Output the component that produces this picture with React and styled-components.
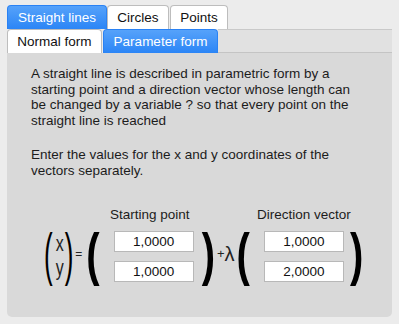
import React from "react";
import styled, { createGlobalStyle } from "styled-components";

const Global = createGlobalStyle`
  body {
    margin: 0;
    background: #ececec;
    font-family: "Liberation Sans", Arial, sans-serif;
    color: #1c1c1c;
  }
`;

const Page = styled.div`
  width: 385px;
  padding: 5px 7px 6px 7px;
`;

const TabRow = styled.div`
  display: flex;
  height: 24px;
`;

const Tab = styled.div`
  box-sizing: border-box;
  width: ${p => p.$w}px;
  margin-left: ${p => p.$gap || 0}px;
  height: 24px;
  display: flex;
  align-items: center;
  justify-content: center;
  font-size: 13.5px;
  border-radius: 4px 4px 0 0;
  border: 1px solid ${p => (p.$active ? "#2a82f4" : "#bdbdbd")};
  border-bottom: none;
  background: ${p =>
    p.$active ? "linear-gradient(#56a2fa, #2b85f6)" : "#ffffff"};
  color: ${p => (p.$active ? "#ffffff" : "#111111")};
`;

const TabStrip = styled.div`
  flex: 1;
  box-sizing: border-box;
  background: #e1e1e1;
  border-top: 1px solid #c9c9c9;
  border-bottom: 1px solid #c4c4c4;
`;

const Panel = styled.div`
  background: #d9d9d9;
  height: 264px;
  box-sizing: border-box;
  border-radius: 0 0 5px 5px;
  padding: 13px 20px 0 24px;
`;

const Paragraph = styled.p`
  margin: 0 0 ${p => p.$after || 0}px 0;
  font-size: 13.5px;
  line-height: 15.5px;
`;

const Equation = styled.div`
  display: flex;
  align-items: flex-end;
  height: 76px;
  margin: 28px 0 0 13px;
`;

/* stretched bracket glyph: narrow font, tall scale */
const Paren = styled.span`
  display: block;
  height: 56px;
  margin: 0 ${p => p.$mr || 0}px 0 ${p => p.$ml || 0}px;
  font-size: ${p => (p.$big ? 40 : 26)}px;
  font-weight: ${p => (p.$big ? 700 : 400)};
  line-height: 56px;
  color: #000;
  transform: scaleY(${p => (p.$big ? 1.45 : 2.2)});
`;

const XY = styled.div`
  display: flex;
  flex-direction: column;
  height: 56px;
  margin: 0 1px 0 3px;
  font-size: 16px;
  line-height: 24px;
  color: #222;

  span {
    display: block;
    transform: scaleY(1.4);
  }
  span:first-child {
    margin-top: 6px;
  }
`;

const Sign = styled.span`
  display: block;
  font-size: ${p => p.$size}px;
  line-height: 56px;
  height: 56px;
  margin: 0 ${p => p.$mr || 0}px 0 ${p => p.$ml || 0}px;
  color: #222;
`;

const Vector = styled.div`
  display: flex;
  flex-direction: column;
  width: 80px;
  margin: 0 ${p => p.$mr || 0}px 0 ${p => p.$ml || 0}px;
`;

const Label = styled.div`
  font-size: 13.5px;
  line-height: 15px;
  text-align: center;
  white-space: nowrap;
  margin: 0 ${p => -20 + (p.$shift || 0)}px 9px ${p => -20 - (p.$shift || 0)}px;
`;

const Field = styled.div`
  box-sizing: border-box;
  width: 80px;
  height: 21px;
  background: #ffffff;
  border: 1px solid #b8b8b8;
  font-size: 13.5px;
  line-height: 19px;
  text-align: center;
  color: #111;
  & + & {
    margin-top: 9px;
  }
`;

export default function App() {
  return (
    <>
      <Global />
      <Page>
        <TabRow>
          <Tab $w={100} $active>Straight lines</Tab>
          <Tab $w={62}>Circles</Tab>
          <Tab $w={58} $gap={1}>Points</Tab>
        </TabRow>
        <TabRow>
          <Tab $w={95}>Normal form</Tab>
          <Tab $w={115} $gap={1} $active>Parameter form</Tab>
          <TabStrip />
        </TabRow>
        <Panel>
          <Paragraph $after={19}>
            A straight line is described in parametric form by a<br />
            starting point and a direction vector whose length can<br />
            be changed by a variable ? so that every point on the<br />
            straight line is reached
          </Paragraph>
          <Paragraph>
            Enter the values for the x and y coordinates of the<br />
            vectors separately.
          </Paragraph>
          <Equation>
            <Paren>(</Paren>
            <XY>
              <span>x</span>
              <span>y</span>
            </XY>
            <Paren>)</Paren>
            <Sign $size={12} $ml={2} $mr={4}>=</Sign>
            <Paren $big>(</Paren>
            <Vector $ml={14} $mr={8}>
              <Label $shift={4}>Starting point</Label>
              <Field>1,0000</Field>
              <Field>1,0000</Field>
            </Vector>
            <Paren $big>)</Paren>
            <Sign $size={13} $ml={2}>+</Sign>
            <Sign $size={20}>λ</Sign>
            <Paren $big $ml={2}>(</Paren>
            <Vector $ml={14} $mr={6}>
              <Label>Direction vector</Label>
              <Field>1,0000</Field>
              <Field>2,0000</Field>
            </Vector>
            <Paren $big>)</Paren>
          </Equation>
        </Panel>
      </Page>
    </>
  );
}
